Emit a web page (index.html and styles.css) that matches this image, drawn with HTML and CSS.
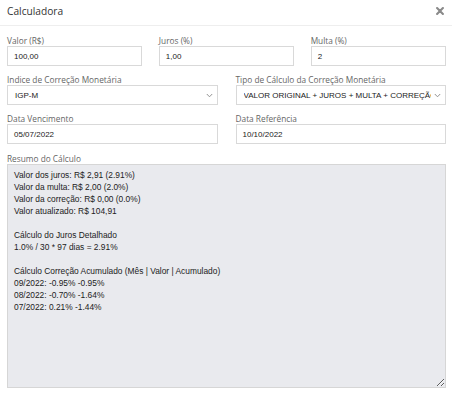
FILE: index.html
```html
<!DOCTYPE html>
<html lang="pt-BR">
<head>
<meta charset="utf-8">
<title>Calculadora</title>
<link rel="stylesheet" href="styles.css">
</head>
<body>
<div class="modal">
  <div class="modal-header">
    <h4 class="modal-title">Calculadora</h4>
    <button class="close" type="button" aria-label="Fechar">
      <svg width="8" height="8" viewBox="0 0 8 8"><path d="M1.1 1.1 L6.9 6.9 M6.9 1.1 L1.1 6.9" stroke="#8a8a8a" stroke-width="2.1" stroke-linecap="round"/></svg>
    </button>
  </div>
  <div class="modal-body">
    <div class="row row-3">
      <div class="field">
        <label class="label">Valor (R$)</label>
        <div class="control">100,00</div>
      </div>
      <div class="field">
        <label class="label">Juros (%)</label>
        <div class="control">1,00</div>
      </div>
      <div class="field">
        <label class="label">Multa (%)</label>
        <div class="control">2</div>
      </div>
    </div>
    <div class="row row-2">
      <div class="field">
        <label class="label">Indice de Correção Monetária</label>
        <div class="control select"><span class="select-text">IGP-M</span>
          <svg class="chev" width="7" height="5" viewBox="0 0 7 5"><path d="M0.8 1 L3.5 3.8 L6.2 1" fill="none" stroke="#888" stroke-width="0.9"/></svg>
        </div>
      </div>
      <div class="field">
        <label class="label">Tipo de Cálculo da Correção Monetária</label>
        <div class="control select"><span class="select-text">VALOR ORIGINAL + JUROS + MULTA + CORREÇÃO</span>
          <svg class="chev" width="7" height="5" viewBox="0 0 7 5"><path d="M0.8 1 L3.5 3.8 L6.2 1" fill="none" stroke="#888" stroke-width="0.9"/></svg>
        </div>
      </div>
    </div>
    <div class="row row-2">
      <div class="field">
        <label class="label">Data Vencimento</label>
        <div class="control">05/07/2022</div>
      </div>
      <div class="field">
        <label class="label">Data Referência</label>
        <div class="control">10/10/2022</div>
      </div>
    </div>
    <div class="field field-summary">
      <label class="label">Resumo do Cálculo</label>
      <textarea class="summary" readonly>Valor dos juros: R$ 2,91 (2.91%)
Valor da multa: R$ 2,00 (2.0%)
Valor da correção: R$ 0,00 (0.0%)
Valor atualizado: R$ 104,91

Cálculo do Juros Detalhado
1.0% / 30 * 97 dias = 2.91%

Cálculo Correção Acumulado (Mês | Valor | Acumulado)
09/2022: -0.95% -0.95%
08/2022: -0.70% -1.64%
07/2022: 0.21% -1.44%</textarea>
    </div>
  </div>
</div>
</body>
</html>
```
FILE: styles.css
```css
html, body {
  margin: 0;
  padding: 0;
  background: #ffffff;
}
body {
  font-family: "Open Sans", "Liberation Sans", sans-serif;
  color: #333;
}
.modal {
  width: 452px;
}
.modal-header {
  height: 26px;
  box-sizing: border-box;
  border-bottom: 1px solid #eeeeee;
  display: flex;
  align-items: center;
  justify-content: space-between;
  padding: 0 8px 3px 7px;
}
.modal-title {
  margin: 0;
  font-size: 10.2px;
  font-weight: 400;
  color: #333;
  line-height: 1;
}
.close {
  border: 0;
  background: none;
  padding: 0;
  width: 8px;
  height: 8px;
  display: flex;
}
.modal-body {
  padding: 9px 6px 0 7px;
  display: flex;
  flex-direction: column;
  gap: 8px;
}
.row {
  display: grid;
}
.row-3 {
  grid-template-columns: 1fr 1fr 1fr;
  column-gap: 16.5px;
}
.row-2 {
  grid-template-columns: 1fr 1fr;
  column-gap: 18px;
}
.field {
  display: flex;
  flex-direction: column;
  min-width: 0;
}
.field-summary {
  margin-top: 1px;
}
.label {
  font-family: "Open Sans", sans-serif;
  font-size: 8.3px;
  line-height: 11px;
  height: 11px;
  color: #666;
}
.control {
  box-sizing: border-box;
  height: 20px;
  border: 1px solid #d9d9d9;
  background: #fff;
  font-family: "Liberation Sans", Arial, sans-serif;
  font-size: 8px;
  color: #222;
  display: flex;
  align-items: center;
  padding: 0 6px;
}
.select {
  padding: 0 4px 0 7px;
  gap: 3px;
}
.select-text {
  flex: 1;
  white-space: nowrap;
  overflow: hidden;
  min-width: 0;
}
.chev {
  flex: none;
}
.summary {
  box-sizing: border-box;
  height: 224px;
  width: 100%;
  margin: 0;
  border: 1px solid #d6d6d6;
  background: #e9eaee;
  font-family: "Liberation Sans", Arial, sans-serif;
  font-size: 8.4px;
  line-height: 12px;
  color: #222;
  padding: 4px 6px;
  resize: vertical;
  overflow: hidden;
  outline: none;
}
```
